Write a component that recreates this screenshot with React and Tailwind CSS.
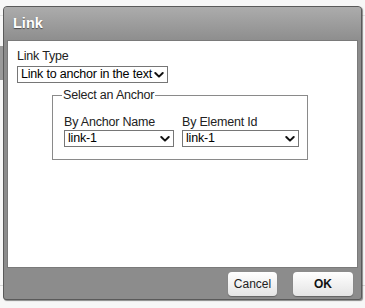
import React, { useState } from 'react';

function Chevron() {
  return (
    <svg className="pointer-events-none absolute right-[4px] top-1/2 -translate-y-1/2" width="10" height="7" viewBox="0 0 10 7">
      <path d="M1.3 1.5 L5 5.1 L8.7 1.5" fill="none" stroke="#111" strokeWidth="2" strokeLinecap="round" strokeLinejoin="round" />
    </svg>
  );
}

function Dropdown({ value, options, width, onChange }) {
  return (
    <div className={`relative ${width}`}>
      <select
        value={value}
        onChange={e => onChange(e.target.value)}
        className="block h-[17px] w-full appearance-none rounded-none border border-[#767676] bg-white pl-[3px] pr-[12px] text-[12.5px] leading-[15px] tracking-[-0.2px] text-black outline-none"
      >
        {options.map(o => <option key={o} value={o}>{o}</option>)}
      </select>
      <Chevron />
    </div>
  );
}

export default function App() {
  const [linkType, setLinkType] = useState("Link to anchor in the text");
  const [anchorName, setAnchorName] = useState("link-1");
  const [elementId, setElementId] = useState("link-1");

  return (
    <div className="relative h-[308px] w-[365px] overflow-hidden bg-[#f7f7f7] font-['Liberation_Sans',Arial,sans-serif]">
      {/* faint page lines behind the dialog */}
      <div className="absolute left-0 right-0 top-[15px] h-px bg-[#e2e2e2]"></div>
      <div className="absolute left-0 right-0 top-[285px] h-px bg-[#d8d8d8]"></div>
      <div className="absolute left-0 top-[46px] h-[34px] w-[3px] bg-[#9a9a9a]"></div>

      <div className="absolute left-[3px] top-[6px] flex h-[294px] w-[359px] flex-col rounded-t-[4px] rounded-b-[3px] border border-[#5a5a5a] bg-[#8c8c8c] shadow-[1px_1px_1px_rgba(0,0,0,0.45)]">
        {/* title bar */}
        <div className="flex h-[33px] items-center rounded-t-[3px] bg-gradient-to-b from-[#acacac] to-[#8e8e8e] px-[9px]">
          <span className="text-[14.5px] font-bold text-white [text-shadow:0_1px_1px_rgba(0,0,0,0.5)]">Link</span>
        </div>

        {/* body */}
        <div className="mx-[3px] h-[228px] border border-[#7a7a7a] bg-white px-[9px] pt-[8px]">
          <div className="text-[12.5px] leading-[14px] tracking-[-0.2px] text-[#222]">Link Type</div>
          <div className="mt-[3px]">
            <Dropdown value={linkType} width="w-[151px]" onChange={setLinkType}
              options={["Link to anchor in the text", "URL", "E-mail"]} />
          </div>

          <fieldset className="ml-[35px] mt-[5px] h-[72px] w-[256px] border border-[#8a8a8a] pl-[11px] pr-[7px]">
            <legend className="ml-[-2px] px-[1px] text-[12.5px] leading-[14px] tracking-[-0.2px] text-[#222]">Select an Anchor</legend>
            <div className="mt-[13px] flex gap-[8px]">
              <div>
                <div className="text-[12.5px] leading-[14px] tracking-[-0.2px] text-[#222]">By Anchor Name</div>
                <div className="mt-[1px]">
                  <Dropdown value={anchorName} width="w-[110px]" onChange={setAnchorName} options={["link-1", "link-2"]} />
                </div>
              </div>
              <div>
                <div className="text-[12.5px] leading-[14px] tracking-[-0.2px] text-[#222]">By Element Id</div>
                <div className="mt-[1px]">
                  <Dropdown value={elementId} width="w-[117px]" onChange={setElementId} options={["link-1", "link-2"]} />
                </div>
              </div>
            </div>
          </fieldset>
        </div>

        {/* footer */}
        <div className="flex flex-1 items-center justify-end gap-[16px] pr-[8px]">
          <button className="h-[24px] w-[49px] rounded-[4px] bg-gradient-to-b from-white to-[#e4e4e4] text-[12px] text-[#222] shadow-[0_1px_1px_rgba(0,0,0,0.3)]">Cancel</button>
          <button className="h-[24px] w-[60px] rounded-[4px] bg-gradient-to-b from-white to-[#e4e4e4] text-[12px] font-bold text-[#111] shadow-[0_1px_1px_rgba(0,0,0,0.3)]">OK</button>
        </div>
      </div>
    </div>
  );
}
